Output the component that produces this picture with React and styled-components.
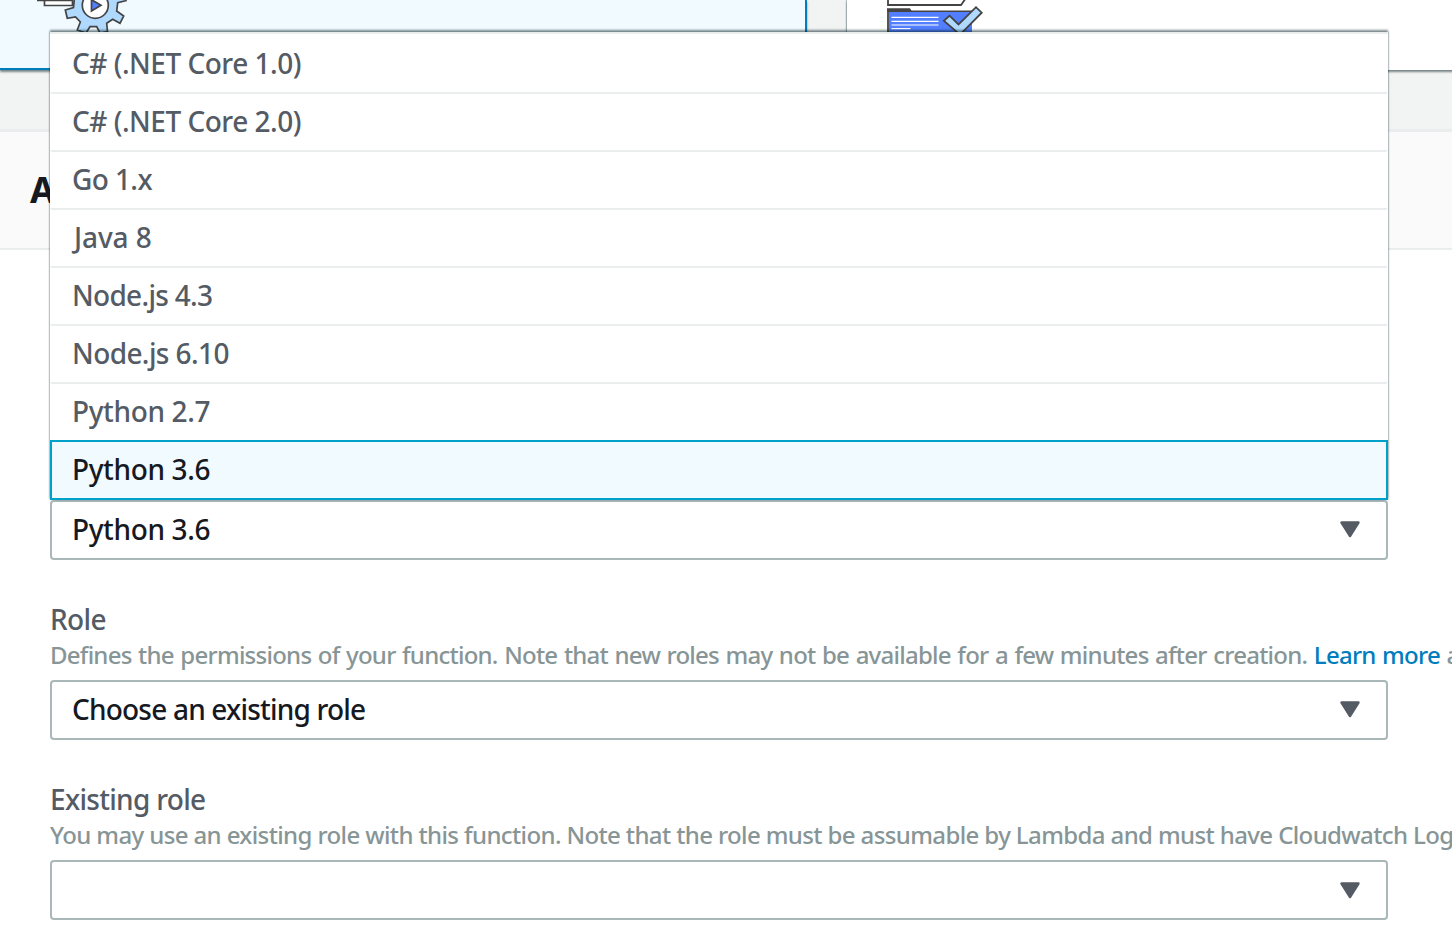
import React from "react";
import styled, { createGlobalStyle } from "styled-components";

const GlobalStyle = createGlobalStyle`
  *, *::before, *::after { box-sizing: border-box; }
  body {
    margin: 0;
    background: #f2f3f3;
    font-family: "Noto Sans", "Open Sans", sans-serif;
    color: #16191f;
    overflow: hidden;
  }
`;

const Page = styled.div`
  width: 100%;
  height: 938px;
  overflow: hidden;
  display: flex;
  flex-direction: column;
`;

const Options = styled.div`
  flex: none;
  display: flex;
  gap: 40px;
  height: 70px;
  margin-bottom: 59px;
`;

const OptionCard = styled.div`
  flex: none;
  width: ${(p) => p.$width}px;
  padding-left: ${(p) => p.$inset}px;
  background: ${(p) => (p.$selected ? "#f1faff" : "#fff")};
  border: solid #007dbc;
  border-width: ${(p) => (p.$selected ? "0 2px 2px 0" : "0")};
  box-shadow: 0 2px 2px rgba(0, 28, 36, 0.5), -1px 0 1px rgba(0, 28, 36, 0.2);

  svg { display: block; }
`;

const Panel = styled.section`
  flex: 1;
  background: #fff;
  border-top: 3px solid #eaeded;
`;

const PanelHeader = styled.header`
  display: flex;
  align-items: center;
  height: 118px;
  padding-left: 30px;
  background: #fafafa;
  border-bottom: 2px solid #eaeded;
`;

const PanelTitle = styled.h2`
  margin: 0;
  font-size: 36px;
  line-height: 44px;
  font-weight: 700;
`;

const Form = styled.div`
  display: flex;
  flex-direction: column;
  gap: 42px;
  padding: 250px 64px 0 50px;
`;

const Field = styled.div`
  position: relative;
`;

const Label = styled.div`
  margin-top: -1px;
  font-size: 28px;
  line-height: 36px;
  font-weight: 500;
  color: #545b64;
  letter-spacing: ${(p) => p.$tracking || 0}px;
`;

const Hint = styled.div`
  margin-bottom: 7px;
  font-size: 24px;
  line-height: 36px;
  font-weight: 500;
  white-space: nowrap;
  color: #879596;
  letter-spacing: ${(p) => p.$tracking || 0}px;
  word-spacing: ${(p) => p.$wordGap || 0}px;
`;

const Link = styled.a`
  color: #007dbc;
`;

const SelectBox = styled.div`
  display: flex;
  align-items: center;
  justify-content: space-between;
  height: 60px;
  padding: 0 26px ${(p) => (p.$empty ? 0 : 2)}px 20px;
  background: #fff;
  border: 2px solid #aab7b8;
  border-radius: 4px;
  font-size: 28px;
  line-height: 36px;
  font-weight: 500;
  letter-spacing: ${(p) => p.$tracking || 0}px;
`;

const Menu = styled.ul`
  position: absolute;
  left: 0;
  right: 0;
  bottom: 100%;
  margin: 0;
  padding: 0;
  list-style: none;
  background: #fff;
  border-top: 2px solid #eaeded;
  box-shadow: 0 -2px 2px rgba(0, 28, 36, 0.5), 1px 0 1px rgba(0, 28, 36, 0.13),
    -1px 0 1px rgba(0, 28, 36, 0.13);
`;

const MenuItem = styled.li`
  position: relative;
  height: 60px;
  padding: 9px 20px;
  border: 2px solid transparent;
  font-size: 28px;
  line-height: 36px;
  font-weight: 500;
  color: #545b64;
  letter-spacing: ${(p) => p.$tracking || 0}px;
  text-indent: ${(p) => p.$indent || 0}px;

  & + & {
    margin-top: -2px;
    border-top-color: #eaeded;
  }

  &&[aria-selected="true"] {
    color: #16191f;
    background: #f1faff;
    border-color: #00a1c9;
  }
`;

const runtimes = [
  { name: "C# (.NET Core 1.0)", tracking: -0.49 },
  { name: "C# (.NET Core 2.0)", tracking: -0.49 },
  { name: "Go 1.x", tracking: -0.6 },
  { name: "Java 8", tracking: -0.1, indent: 2 },
  { name: "Node.js 4.3", tracking: -0.7 },
  { name: "Node.js 6.10", tracking: -0.6 },
  { name: "Python 2.7", tracking: -0.37 },
  { name: "Python 3.6", tracking: -0.37 },
];

const Caret = () => (
  <svg width="20" height="17" viewBox="0 0 20 17">
    <path d="M1.500 1.500h17L10 15z" fill="#545b64" stroke="#545b64" strokeWidth="2.400" strokeLinejoin="round" />
  </svg>
);

const GearIcon = () => (
  <svg width="100" height="34" viewBox="34 0 100 34" fill="none" stroke="#444" strokeWidth="1.700">
    <path d="M44.500 0v5.500h28V.500H37" fill="#fff" />
    <path
      d="M74.500 -3L73.500 7.500L65.300 10L67.300 18.300L75.500 17L80.300 22L77.300 30L86 33L90 26.700L96.700 26.700L100 33L107.500 31.700L106.700 23.300L112.700 19.300L120 23.300L123.700 16L116.700 11L117.700 2.700L126 .700V-6z"
      fill="#b0d9ff"
    />
    <circle cx="95.300" cy="5.300" r="13" fill="#fff" />
    <path d="M91.500 -.300v11.300l9.500-5.700z" fill="#527fff" />
  </svg>
);

const BlueprintIcon = () => (
  <svg width="110" height="34" viewBox="880 0 110 34">
    <path d="M888 -4v9h73l5-7" fill="#fff" stroke="#444" strokeWidth="1.800" />
    <path d="M888 36V11.500h84" fill="none" stroke="#444" strokeWidth="1.800" />
    <path d="M889 12h83v24h-83z" fill="#527fff" />
    <path d="M887 8.300h23l2 3.200h-25z" fill="#444" />
    <path d="M891.500 17.300h47M891.500 21.300h47M891.500 25h47M891.500 28.600h19" stroke="#fff" strokeWidth="1.200" />
    <path d="M943.800 20.700l5.700-5 9 8.800 17.500-17.300 5.700 5.500-21.700 22z" fill="#b0d9ff" stroke="#444" strokeWidth="1.800" />
  </svg>
);

export default function App() {
  return (
    <>
      <GlobalStyle />
      <Page>
        <Options>
          <OptionCard $selected $width={807} $inset={34}>
            <GearIcon />
          </OptionCard>
          <OptionCard $width={700} $inset={33}>
            <BlueprintIcon />
          </OptionCard>
        </Options>
        <Panel>
          <PanelHeader>
            <PanelTitle>A</PanelTitle>
          </PanelHeader>
          <Form>
            <Field>
              <Menu role="listbox">
                {runtimes.map((r) => (
                  <MenuItem
                    key={r.name}
                    role="option"
                    aria-selected={r.name === "Python 3.6"}
                    $tracking={r.tracking}
                    $indent={r.indent}
                  >
                    {r.name}
                  </MenuItem>
                ))}
              </Menu>
              <SelectBox $tracking={-0.37}>
                Python 3.6
                <Caret />
              </SelectBox>
            </Field>
            <Field>
              <Label $tracking={-0.6}>Role</Label>
              <Hint $tracking={-0.75} $wordGap={1}>
                Defines the permissions of your function. Note that new roles may not be available for a few minutes
                after creation. <Link>Learn more</Link> a
              </Hint>
              <SelectBox $tracking={-0.8}>
                Choose an existing role
                <Caret />
              </SelectBox>
            </Field>
            <Field>
              <Label $tracking={-0.7}>Existing role</Label>
              <Hint $tracking={-0.615}>
                You may use an existing role with this function. Note that the role must be assumable by Lambda and must
                have Cloudwatch Log
              </Hint>
              <SelectBox $empty>
                <span />
                <Caret />
              </SelectBox>
            </Field>
          </Form>
        </Panel>
      </Page>
    </>
  );
}
